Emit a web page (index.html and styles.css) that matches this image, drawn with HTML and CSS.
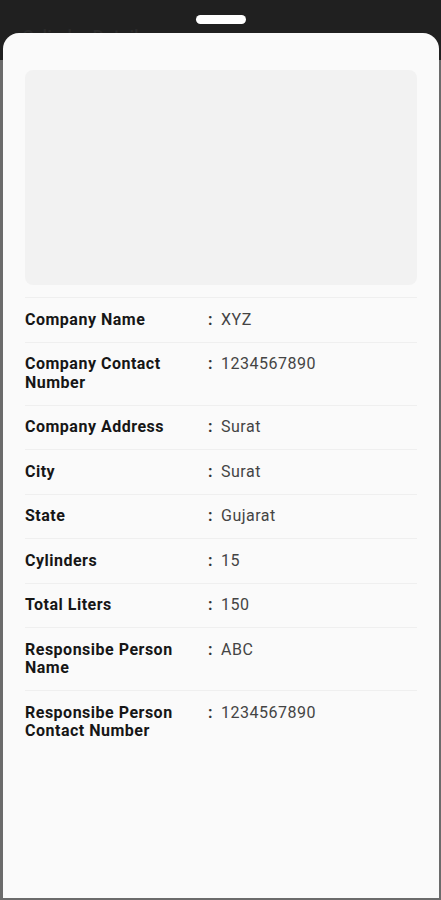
FILE: index.html
```html
<!DOCTYPE html>
<html lang="en">
<head>
    <meta charset="UTF-8">
    <meta name="viewport" content="width=device-width, initial-scale=1.0">
    <title>Cylinder Details</title>
    <link rel="stylesheet" href="styles.css">
</head>
<body>
    <div class="screen">
        <div class="top-bar">
            <span class="behind-title">Cylinder Details</span>
            <div class="handle"></div>
        </div>

        <div class="sheet">
            <div class="photo"></div>

            <div class="details">
                <div class="row">
                    <div class="label">Company Name</div>
                    <div class="colon">:</div>
                    <div class="value">XYZ</div>
                </div>
                <div class="row">
                    <div class="label">Company Contact Number</div>
                    <div class="colon">:</div>
                    <div class="value">1234567890</div>
                </div>
                <div class="row">
                    <div class="label">Company Address</div>
                    <div class="colon">:</div>
                    <div class="value">Surat</div>
                </div>
                <div class="row">
                    <div class="label">City</div>
                    <div class="colon">:</div>
                    <div class="value">Surat</div>
                </div>
                <div class="row">
                    <div class="label">State</div>
                    <div class="colon">:</div>
                    <div class="value">Gujarat</div>
                </div>
                <div class="row">
                    <div class="label">Cylinders</div>
                    <div class="colon">:</div>
                    <div class="value">15</div>
                </div>
                <div class="row">
                    <div class="label">Total Liters</div>
                    <div class="colon">:</div>
                    <div class="value">150</div>
                </div>
                <div class="row">
                    <div class="label">Responsibe Person Name</div>
                    <div class="colon">:</div>
                    <div class="value">ABC</div>
                </div>
                <div class="row">
                    <div class="label">Responsibe Person Contact Number</div>
                    <div class="colon">:</div>
                    <div class="value">1234567890</div>
                </div>
            </div>
        </div>
    </div>
</body>
</html>
```

FILE: styles.css
```css
* {
    margin: 0;
    padding: 0;
    box-sizing: border-box;
}

body {
    font-family: Roboto, 'Noto Sans', sans-serif;
    background: #202020;
    color: #1a1a1a;
}

.screen {
    height: 900px;
    display: flex;
    flex-direction: column;
    background: linear-gradient(#202020 0, #202020 60px, #6b6b6b 60px);
    overflow: hidden;
}

.top-bar {
    height: 33px;
    position: relative;
    display: flex;
    justify-content: center;
    padding-top: 15px;
}

.behind-title {
    position: absolute;
    left: 22px;
    top: 26px;
    font-size: 18px;
    font-weight: 500;
    color: #2a2a2a;
}

.handle {
    position: relative;
    width: 50px;
    height: 9px;
    background: #fff;
    border-radius: 5px;
}

.sheet {
    position: relative;
    z-index: 1;
    flex: 1;
    margin: 0 2px 2px 3px;
    background: #fafafa;
    border-radius: 16px 16px 0 0;
    padding: 37px 22px 0 22px;
}

.photo {
    height: 215px;
    background: #f2f2f2;
    border-radius: 8px;
    margin-bottom: 12px;
}

.details {
    border-top: 1px solid #efefef;
}

.row {
    display: grid;
    grid-template-columns: 183px 13px 1fr;
    padding: 12.5px 0;
    line-height: 18.5px;
    font-size: 16px;
    border-bottom: 1px solid #efefef;
}

.row:last-child {
    border-bottom: none;
}

.label {
    font-weight: 700;
    color: #161616;
    letter-spacing: 0.5px;
    padding-right: 10px;
}

.colon {
    font-weight: 700;
    color: #333;
}

.value {
    color: #444;
    letter-spacing: 0.5px;
}
```
